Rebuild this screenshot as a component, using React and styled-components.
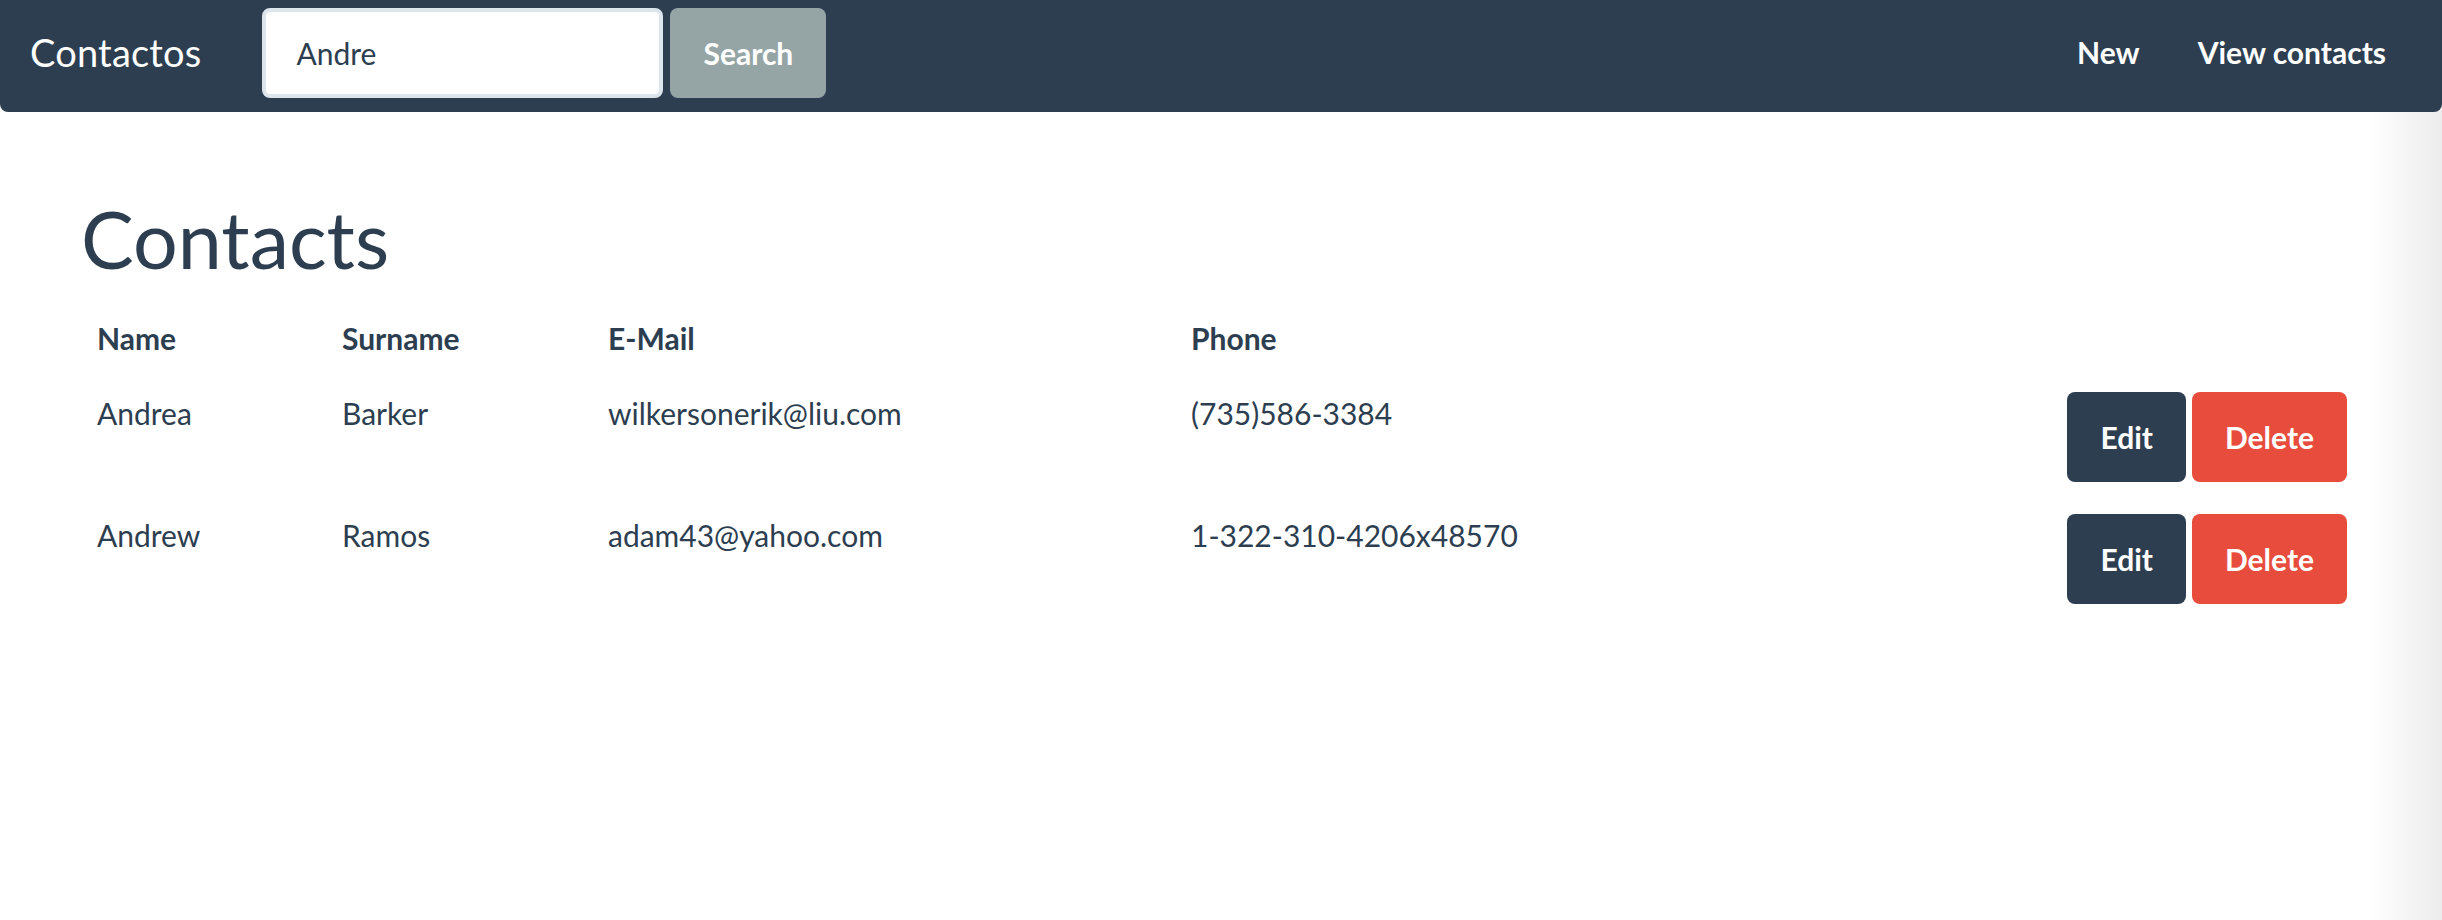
import { createGlobalStyle, styled } from "styled-components";

const GlobalStyle = createGlobalStyle`
  html, body {
    margin: 0;
    padding: 0;
    background: #fff;
  }
  body {
    font-family: Lato, "Open Sans", sans-serif;
    font-size: 30px;
    line-height: 1.42857;
    color: #2c3e50;
  }
  * {
    box-sizing: border-box;
  }
`;

const Page = styled.div`
  min-height: 920px;
  background: linear-gradient(to right, #fff 0, #fff calc(100% - 72px), #ececec 100%);
`;

const Navbar = styled.nav`
  height: 112px;
  padding: 0 56px 7px 30px;
  display: flex;
  align-items: center;
  background: #2c3e50;
  border-radius: 0 0 8px 8px;
`;

const Brand = styled.a`
  color: #fff;
  font-size: 38px;
  letter-spacing: 0.2px;
  text-decoration: none;
  margin-right: 61px;
`;

const SearchForm = styled.form`
  display: flex;
  gap: 7px;
`;

const SearchInput = styled.input`
  width: 401px;
  height: 90px;
  padding: 0 30px;
  border: 4px solid #dce4ec;
  border-radius: 8px;
  font-family: Lato, sans-serif;
  font-size: 30px;
  color: #2c3e50;
  outline: none;
`;

const Button = styled.button`
  height: 90px;
  padding: 0 33px;
  border: none;
  border-radius: 8px;
  background: ${(p) => p.$bg};
  color: #fff;
  font-family: Lato, sans-serif;
  font-size: 30px;
  font-weight: 700;
  cursor: pointer;
`;

const NavLinks = styled.div`
  margin-left: auto;
  display: flex;
  gap: 58px;
`;

const NavLink = styled.a`
  color: #fff;
  font-weight: 700;
  text-decoration: none;
`;

const Container = styled.main`
  padding: 42px 81px 0;
`;

const Heading = styled.h1`
  margin: 42px 0 18px;
  font-size: 79px;
  font-weight: 400;
  line-height: 1.1;
`;

const Row = styled.div`
  display: grid;
  grid-template-columns: 245px 266px 583px 1fr auto;
  padding: 16px 0;
  font-weight: ${(p) => (p.$head ? 700 : 400)};
`;

const Cell = styled.div`
  padding: 0 16px;
`;

const Actions = styled.div`
  display: flex;
  gap: 6px;
  padding: 0 14px;
`;

const contacts = [
  { name: "Andrea", surname: "Barker", email: "wilkersonerik@liu.com", phone: "(735)586-3384" },
  { name: "Andrew", surname: "Ramos", email: "adam43@yahoo.com", phone: "1-322-310-4206x48570" },
];

export default function App() {
  return (
    <Page>
      <GlobalStyle />
      <Navbar>
        <Brand href="#">Contactos</Brand>
        <SearchForm onSubmit={(e) => e.preventDefault()}>
          <SearchInput defaultValue="Andre" />
          <Button $bg="#95a5a6">Search</Button>
        </SearchForm>
        <NavLinks>
          <NavLink href="#">New</NavLink>
          <NavLink href="#">View contacts</NavLink>
        </NavLinks>
      </Navbar>
      <Container>
        <Heading>Contacts</Heading>
        <Row $head>
          <Cell>Name</Cell>
          <Cell>Surname</Cell>
          <Cell>E-Mail</Cell>
          <Cell>Phone</Cell>
          <Cell />
        </Row>
        {contacts.map((c) => (
          <Row key={c.email}>
            <Cell>{c.name}</Cell>
            <Cell>{c.surname}</Cell>
            <Cell>{c.email}</Cell>
            <Cell>{c.phone}</Cell>
            <Actions>
              <Button $bg="#2c3e50">Edit</Button>
              <Button $bg="#e74c3c">Delete</Button>
            </Actions>
          </Row>
        ))}
      </Container>
    </Page>
  );
}
